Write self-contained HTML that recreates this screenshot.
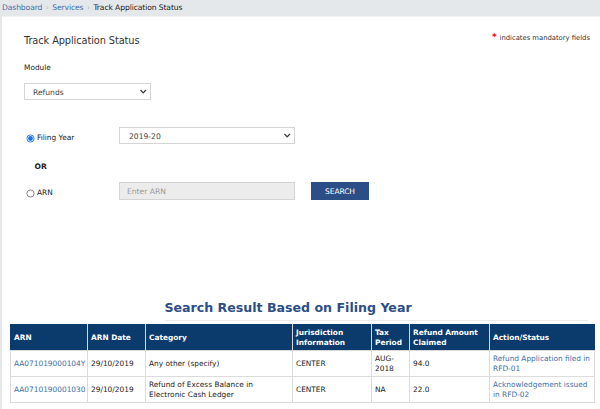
<!DOCTYPE html>
<html><head><meta charset="utf-8">
<style>
*{box-sizing:border-box;margin:0;padding:0}
html,body{width:600px;height:409px;overflow:hidden;background:#e4e8eb;font-family:"DejaVu Sans","Liberation Sans",sans-serif;color:#212121}
.abs{position:absolute}
#crumb{left:0;top:0;width:600px;height:16px;font-size:7.6px;line-height:16px;white-space:nowrap;letter-spacing:-0.1px}
#crumb a{color:#3d6fa8;text-decoration:none}
#crumb .sep{color:#b8bec4;padding:0 3.5px}
#main{left:2px;top:16px;width:598px;height:393px;background:#fff;border-top:1px solid #eff1f3}
.sel{border:1px solid #d4d4d4;background:#fff;font-size:7.6px;height:17px;line-height:17px;color:#444}
table{border-collapse:collapse;font-size:7.4px;table-layout:fixed}
th{background:#0b3a6c;color:#fff;text-align:left;font-weight:bold;border:1px solid #d8d8d8;border-top-color:#0b3a6c;padding:0 3px;line-height:9.5px;vertical-align:middle}
td{border:1px solid #dcdcdc;padding:0 3px;line-height:10px;vertical-align:middle;color:#222}
td a{color:#3d6fa8;text-decoration:none}
</style></head><body>
<div id="crumb" class="abs"><a style="margin-left:2px">Dashboard</a><span class="sep">›</span><a>Services</a><span class="sep">›</span><span>Track Application Status</span></div>
<div id="main" class="abs"></div>
<div class="abs" style="left:24px;top:35px;font-size:9.8px;color:#333;letter-spacing:-0.1px">Track Application Status</div>
<div class="abs" style="left:492.5px;top:33px;font-size:6.8px;color:#333;white-space:nowrap"><span style="color:#e00;font-weight:bold;position:absolute;left:-0.5px;top:-1.5px;font-size:9px">*</span><span style="position:absolute;left:7px;top:1px">indicates mandatory fields</span></div>
<div class="abs" style="left:24px;top:63px;font-size:7.4px;color:#222">Module</div>
<div class="abs sel" style="left:24px;top:83px;width:127px;padding-left:8px">Refunds
<svg class="abs" style="right:3px;top:5px" width="8" height="6" viewBox="0 0 8 6"><path d="M1.5 1 L4.2 3.9 L6.9 1" fill="none" stroke="#3a3a3a" stroke-width="1.3"/></svg></div>

<svg class="abs" style="left:26px;top:134px" width="9" height="9" viewBox="0 0 9 9"><circle cx="4.5" cy="4.5" r="3.6" fill="#fff" stroke="#1a73e8" stroke-width="0.9"/><circle cx="4.5" cy="4.5" r="2.4" fill="#1a73e8"/></svg>
<div class="abs" style="left:37px;top:133px;font-size:7.4px;color:#222">Filing Year</div>
<div class="abs sel" style="left:119px;top:127px;width:176px;padding-left:9px">2019-20
<svg class="abs" style="right:3px;top:5px" width="8" height="6" viewBox="0 0 8 6"><path d="M1.5 1 L4.2 3.9 L6.9 1" fill="none" stroke="#3a3a3a" stroke-width="1.3"/></svg></div>
<div class="abs" style="left:34.5px;top:162px;font-size:7.6px;font-weight:bold;color:#222">OR</div>
<svg class="abs" style="left:26px;top:189px" width="9" height="9" viewBox="0 0 9 9"><circle cx="4.5" cy="4.5" r="3.6" fill="#fff" stroke="#666" stroke-width="0.8"/></svg>
<div class="abs" style="left:37px;top:188px;font-size:7.4px;color:#222">ARN</div>
<div class="abs sel" style="left:119px;top:182px;width:176px;height:18px;line-height:18px;padding-left:7px;background:#ececec;color:#999">Enter ARN</div>
<div class="abs" style="left:311px;top:182px;width:58px;height:18px;background:#2c4e86;color:#fff;font-size:7.6px;line-height:19px;text-align:center;letter-spacing:-0.15px">SEARCH</div>

<div class="abs" style="left:0;top:300px;width:576px;text-align:center;font-size:12.6px;font-weight:bold;color:#2c4e86;white-space:nowrap">Search Result Based on Filing Year</div>
<div class="abs" style="left:165px;top:320px;width:423px;height:1px;background:#ececec"></div>
<table class="abs" style="left:10px;top:324px;width:584px">
<colgroup><col style="width:77px"><col style="width:58px"><col style="width:147px"><col style="width:79px"><col style="width:38px"><col style="width:80px"><col style="width:105px"></colgroup>
<tr style="height:26px"><th style="border-left-color:#0b3a6c">ARN</th><th>ARN Date</th><th>Category</th><th>Jurisdiction Information</th><th>Tax Period</th><th>Refund Amount Claimed</th><th style="border-right-color:#0b3a6c">Action/Status</th></tr>
<tr style="height:26px"><td><a>AA071019000104Y</a></td><td>29/10/2019</td><td>Any other (specify)</td><td>CENTER</td><td>AUG-2018</td><td>94.0</td><td><a>Refund Application filed in RFD-01</a></td></tr>
<tr style="height:26px"><td><a>AA0710190001030</a></td><td>29/10/2019</td><td>Refund of Excess Balance in Electronic Cash Ledger</td><td>CENTER</td><td>NA</td><td>22.0</td><td><a>Acknowledgement issued in RFD-02</a></td></tr>
</table>
</body></html>
